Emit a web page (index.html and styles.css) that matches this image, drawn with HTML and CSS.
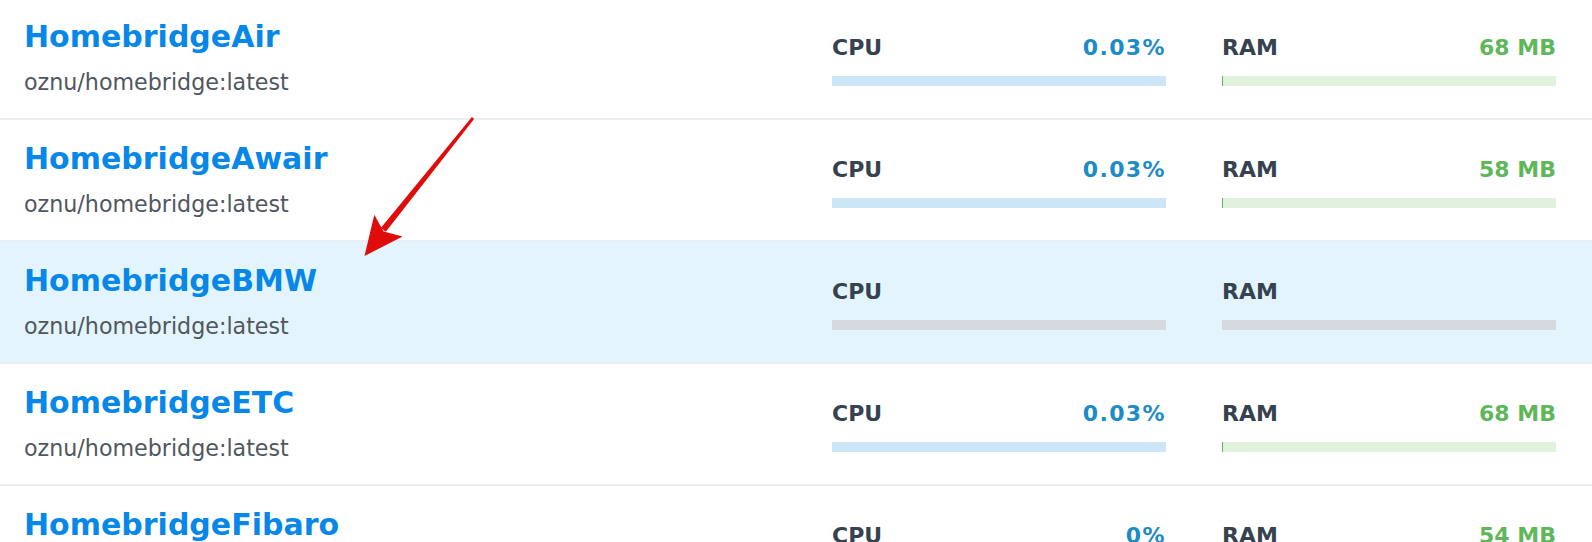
FILE: index.html
```html
<!DOCTYPE html>
<html>
<head>
<meta charset="utf-8">
<title>Containers</title>
<link rel="stylesheet" href="styles.css">
</head>
<body>
<div class="list">
  <div class="row">
    <div class="name">
      <div class="title">HomebridgeAir</div>
      <div class="image">oznu/homebridge:latest</div>
    </div>
    <div class="metric cpu">
      <div class="head"><span class="label">CPU</span><span class="value">0.03%</span></div>
      <div class="bar"><div class="fill" style="width:0%"></div></div>
    </div>
    <div class="metric ram">
      <div class="head"><span class="label">RAM</span><span class="value">68 MB</span></div>
      <div class="bar"><div class="fill" style="width:1px"></div></div>
    </div>
  </div>
  <div class="row">
    <div class="name">
      <div class="title">HomebridgeAwair</div>
      <div class="image">oznu/homebridge:latest</div>
    </div>
    <div class="metric cpu">
      <div class="head"><span class="label">CPU</span><span class="value">0.03%</span></div>
      <div class="bar"><div class="fill" style="width:0%"></div></div>
    </div>
    <div class="metric ram">
      <div class="head"><span class="label">RAM</span><span class="value">58 MB</span></div>
      <div class="bar"><div class="fill" style="width:1px"></div></div>
    </div>
  </div>
  <div class="row selected">
    <div class="name">
      <div class="title">HomebridgeBMW</div>
      <div class="image">oznu/homebridge:latest</div>
    </div>
    <div class="metric stopped">
      <div class="head"><span class="label">CPU</span><span class="value"></span></div>
      <div class="bar"></div>
    </div>
    <div class="metric stopped">
      <div class="head"><span class="label">RAM</span><span class="value"></span></div>
      <div class="bar"></div>
    </div>
  </div>
  <div class="row">
    <div class="name">
      <div class="title">HomebridgeETC</div>
      <div class="image">oznu/homebridge:latest</div>
    </div>
    <div class="metric cpu">
      <div class="head"><span class="label">CPU</span><span class="value">0.03%</span></div>
      <div class="bar"><div class="fill" style="width:0%"></div></div>
    </div>
    <div class="metric ram">
      <div class="head"><span class="label">RAM</span><span class="value">68 MB</span></div>
      <div class="bar"><div class="fill" style="width:1px"></div></div>
    </div>
  </div>
  <div class="row">
    <div class="name">
      <div class="title">HomebridgeFibaro</div>
      <div class="image">oznu/homebridge:latest</div>
    </div>
    <div class="metric cpu">
      <div class="head"><span class="label">CPU</span><span class="value">0%</span></div>
      <div class="bar"><div class="fill" style="width:0%"></div></div>
    </div>
    <div class="metric ram">
      <div class="head"><span class="label">RAM</span><span class="value">54 MB</span></div>
      <div class="bar"><div class="fill" style="width:1px"></div></div>
    </div>
  </div>
</div>
<svg class="arrow" width="1592" height="542" viewBox="0 0 1592 542" xmlns="http://www.w3.org/2000/svg">
  <polygon points="471.9,117.1 474.1,118.9 385.8,231.8 380.8,227.9" fill="#e00b0b"/>
  <polygon points="364.5,256 374.3,214.8 383.6,231.4 402.6,236.4" fill="#e00b0b"/>
</svg>
</body>
</html>
```
FILE: styles.css
```css
html, body {
  margin: 0;
  padding: 0;
  background: #ffffff;
}

body {
  position: relative;
  width: 1592px;
  height: 542px;
  overflow: hidden;
  font-family: "DejaVu Sans", Verdana, sans-serif;
}

.list {
  margin-top: -4px;
}

.row {
  display: grid;
  grid-template-columns: 1fr 334px 334px;
  column-gap: 56px;
  align-items: start;
  height: 99px;
  padding: 21px 36px 0 24px;
  box-sizing: content-box;
  border-top: 2px solid #e9edf1;
  background: #ffffff;
}

.row.selected {
  background: #e3f4fd;
  border-top-color: #e6eef3;
}

.title {
  font-size: 30px;
  line-height: 36px;
  font-weight: bold;
  color: #0787e8;
}

.image {
  margin-top: 14px;
  font-size: 22.2px;
  line-height: 26px;
  color: #4f5760;
}

.metric {
  padding-top: 16px;
}

.head {
  display: flex;
  justify-content: space-between;
  font-size: 22px;
  line-height: 26px;
  font-weight: bold;
}

.label {
  color: #36424f;
}

.cpu .value {
  color: #1d8bc6;
  letter-spacing: 1.4px;
}

.ram .value {
  color: #5fb75a;
}

.bar {
  margin-top: 15px;
  height: 10px;
  background: #d6d9de;
  overflow: hidden;
}

.cpu .bar {
  background: #cce6f8;
}

.ram .bar {
  background: #e0f2dc;
}

.fill {
  height: 100%;
}

.cpu .fill {
  background: #1d8bc6;
}

.ram .fill {
  background: #5cb85c;
}

.arrow {
  position: absolute;
  left: 0;
  top: 0;
  pointer-events: none;
}
```
